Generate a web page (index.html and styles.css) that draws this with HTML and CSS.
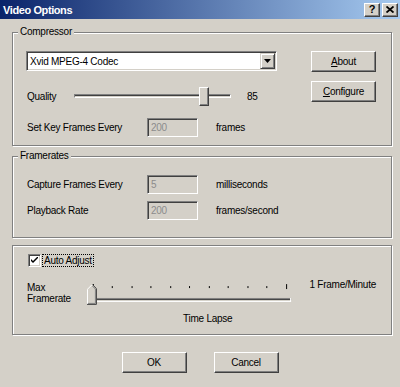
FILE: index.html
```html
<!DOCTYPE html>
<html lang="en">
<head>
<meta charset="UTF-8">
<title>Video Options</title>
<link rel="stylesheet" href="styles.css">
</head>
<body>
<div class="window">
  <div class="titlebar">
    <span class="title">Video Options</span>
    <div class="cap-btns">
      <span class="cap-btn">?</span>
      <span class="cap-btn">
        <svg width="8" height="7" viewBox="0 0 8 7"><path d="M0.5 0.5 L7.5 6.5 M7.5 0.5 L0.5 6.5" stroke="#000" stroke-width="1.8"/></svg>
      </span>
    </div>
  </div>

  <fieldset class="group group-comp">
    <legend>Compressor</legend>
    <div class="comp">
      <div class="comp-main">
        <div class="combo">
          <span class="combo-text">Xvid MPEG-4 Codec</span>
          <span class="combo-btn">
            <svg width="7" height="4" viewBox="0 0 7 4"><path d="M0 0 H7 L3.5 4 Z" fill="#000"/></svg>
          </span>
        </div>
        <div class="quality">
          <span class="quality-lbl">Quality</span>
          <div class="track-wrap">
            <div class="track"></div>
            <div class="thumb"></div>
          </div>
          <span class="quality-val">85</span>
        </div>
        <div class="field">
          <span class="field-lbl">Set Key Frames Every</span>
          <span class="edit">200</span>
          <span class="unit">frames</span>
        </div>
      </div>
      <div class="comp-side">
        <button class="btn"><u>A</u>bout</button>
        <button class="btn"><u>C</u>onfigure</button>
      </div>
    </div>
  </fieldset>

  <fieldset class="group group-rate">
    <legend>Framerates</legend>
    <div class="field">
      <span class="field-lbl">Capture Frames Every</span>
      <span class="edit">5</span>
      <span class="unit">milliseconds</span>
    </div>
    <div class="field">
      <span class="field-lbl">Playback Rate</span>
      <span class="edit">200</span>
      <span class="unit">frames/second</span>
    </div>
  </fieldset>

  <fieldset class="group group-adjust">
    <div class="check-row">
      <span class="checkbox">
        <svg width="7" height="7" viewBox="0 0 7 7"><path d="M0 2 L0 4 L2 6 L7 1 L7 -1 L2 4 Z" fill="#000"/></svg>
      </span>
      <span class="check-lbl">Auto Adjust</span>
    </div>
    <div class="rate-row">
      <span class="rate-lbl">Max<br>Framerate</span>
      <svg class="rate-slider" width="208" height="23" viewBox="0 0 208 23">
        <g fill="#000">
          <rect x="6" y="1" width="1" height="5"/>
          <rect x="25" y="3" width="1" height="2"/>
          <rect x="45" y="3" width="1" height="2"/>
          <rect x="64" y="3" width="1" height="2"/>
          <rect x="84" y="3" width="1" height="2"/>
          <rect x="103" y="3" width="1" height="2"/>
          <rect x="123" y="3" width="1" height="2"/>
          <rect x="142" y="3" width="1" height="2"/>
          <rect x="162" y="3" width="1" height="2"/>
          <rect x="181" y="3" width="1" height="2"/>
          <rect x="201" y="1" width="1" height="5"/>
        </g>
        <rect x="9" y="15" width="197" height="1" fill="#808080"/>
        <rect x="9" y="16" width="197" height="1" fill="#404040"/>
        <rect x="9" y="18" width="197" height="1" fill="#fff"/>
        <rect x="205" y="15" width="1" height="4" fill="#fff"/>
        <path d="M0 6 L5 1 L10 6 L10 22 L0 22 Z" fill="#d4d0c8"/>
        <path d="M0.5 22 V6.2 L5 1.7" stroke="#fff" fill="none"/>
        <path d="M5.5 1.5 L9.5 5.5 V21.5 H0" stroke="#404040" fill="none"/>
        <path d="M5.5 3 L8.5 6 V20.5 H1" stroke="#808080" fill="none"/>
      </svg>
      <span class="rate-max">1 Frame/Minute</span>
    </div>
    <div class="timelapse">Time Lapse</div>
  </fieldset>

  <div class="actions">
    <button class="btn">OK</button>
    <button class="btn">Cancel</button>
  </div>
</div>
</body>
</html>
```

FILE: styles.css
```css
* {
  box-sizing: border-box;
}
html, body {
  margin: 0;
  height: 100%;
}
body {
  background: #d4d0c8;
  font-family: "Liberation Sans", Arial, sans-serif;
  font-size: 10px;
  letter-spacing: -0.25px;
  color: #000;
}
.window {
  width: 400px;
  height: 387px;
  overflow: hidden;
  background: #d4d0c8;
}

/* title bar */
.titlebar {
  height: 19px;
  display: flex;
  align-items: center;
  padding: 0 2px 0 3px;
  background: linear-gradient(to right, #0a246a, #a6caf0);
}
.title {
  flex: 1;
  color: #fff;
  font-weight: bold;
  font-size: 11px;
  letter-spacing: -0.4px;
  padding-top: 1px;
}
.cap-btns {
  display: flex;
  gap: 2px;
}
.cap-btn {
  width: 16px;
  height: 14px;
  display: flex;
  align-items: center;
  justify-content: center;
  background: #d4d0c8;
  border: 1px solid;
  border-color: #fff #404040 #404040 #fff;
  box-shadow: inset -1px -1px #808080;
  font-weight: bold;
  font-size: 11px;
  letter-spacing: 0;
  line-height: 1;
}

/* group boxes */
.group {
  margin: 0 8px 0 12px;
  border: 1px solid #808080;
  box-shadow: inset 1px 1px #fff, 1px 1px #fff;
  padding: 0 15px 0 14px;
  min-width: 0;
}
.group legend {
  padding: 0 2px;
  margin-left: -9px;
  line-height: 12px;
  background: #d4d0c8;
}
.group-comp {
  margin-top: 7px;
  padding-top: 13px;
  padding-bottom: 8px;
}
.group-rate {
  margin-top: 4px;
  padding-top: 13px;
  padding-bottom: 17px;
}
.group-adjust {
  margin-top: 7px;
  padding-top: 8px;
  padding-bottom: 10px;
}

/* compressor */
.comp {
  display: flex;
  justify-content: space-between;
}
.comp-main {
  width: 265px;
}
.comp-side {
  display: flex;
  flex-direction: column;
  gap: 9px;
}
.combo {
  width: 251px;
  height: 20px;
  margin-left: -1px;
  display: flex;
  align-items: center;
  background: #fff;
  border: 1px solid;
  border-color: #808080 #fff #fff #808080;
  box-shadow: inset 1px 1px #404040, inset -1px -1px #d4d0c8;
  padding: 1px;
}
.combo-text {
  flex: 1;
  padding-left: 2px;
}
.combo-btn {
  width: 15px;
  height: 16px;
  display: flex;
  align-items: center;
  justify-content: center;
  background: #d4d0c8;
  border: 1px solid;
  border-color: #d4d0c8 #404040 #404040 #d4d0c8;
  box-shadow: inset 1px 1px #fff, inset -1px -1px #808080;
}
.quality {
  display: flex;
  align-items: center;
  height: 19px;
  margin-top: 16px;
}
.quality-lbl {
  width: 47px;
}
.track-wrap {
  position: relative;
  width: 157px;
  height: 19px;
}
.track {
  position: absolute;
  left: 0;
  top: 7px;
  width: 157px;
  height: 4px;
  border: 1px solid;
  border-color: #808080 #fff #fff #808080;
  box-shadow: inset 0 1px #404040;
}
.thumb {
  position: absolute;
  left: 125px;
  top: 0;
  width: 10px;
  height: 19px;
  background: #d4d0c8;
  border: 1px solid;
  border-color: #fff #404040 #404040 #fff;
  box-shadow: inset -1px -1px #808080;
}
.quality-val {
  margin-left: 16px;
}

/* label + edit rows */
.field {
  display: flex;
  align-items: center;
  height: 19px;
}
.comp-main .field {
  margin-top: 12px;
}
.group-rate .field + .field {
  margin-top: 7px;
}
.field-lbl {
  width: 120px;
}
.edit {
  width: 51px;
  height: 19px;
  padding: 3px 0 0 3px;
  color: #8c8c8c;
  border: 1px solid;
  border-color: #808080 #fff #fff #808080;
  box-shadow: inset 1px 1px #404040, inset -1px -1px #d4d0c8;
}
.unit {
  margin-left: 18px;
}

/* buttons */
.btn {
  width: 65px;
  height: 21px;
  padding: 0;
  font: inherit;
  letter-spacing: inherit;
  color: #000;
  background: #d4d0c8;
  border: 1px solid;
  border-color: #fff #404040 #404040 #fff;
  box-shadow: inset -1px -1px #808080;
}

/* auto adjust */
.check-row {
  display: flex;
  align-items: center;
  height: 13px;
}
.checkbox {
  width: 13px;
  height: 13px;
  margin-left: 1px;
  display: flex;
  align-items: center;
  justify-content: center;
  background: #fff;
  border: 1px solid;
  border-color: #808080 #fff #fff #808080;
  box-shadow: inset 1px 1px #404040, inset -1px -1px #d4d0c8;
}
.check-lbl {
  margin-left: 2px;
  padding: 0 1px;
  line-height: 11px;
  outline: 1px dotted #000;
}
.rate-row {
  display: flex;
  align-items: flex-start;
  margin-top: 15px;
}
.rate-lbl {
  width: 61px;
  line-height: 11px;
}
.rate-slider {
  display: block;
  margin-top: 1px;
}
.rate-max {
  margin-left: 16px;
  margin-top: -3px;
  white-space: nowrap;
}
.timelapse {
  margin-top: 7px;
  padding-left: 156px;
}

.actions {
  display: flex;
  justify-content: center;
  gap: 27px;
  margin-top: 17px;
}
```
